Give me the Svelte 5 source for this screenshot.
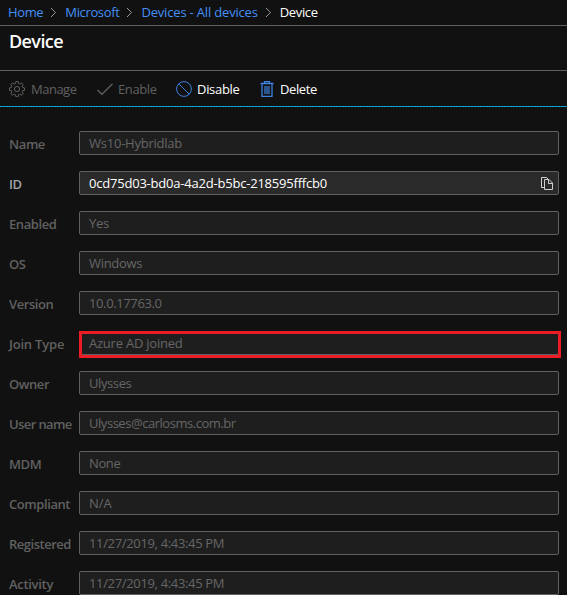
<script lang="ts">
  interface Field {
    label: string;
    value: string;
    labelGap?: number; // letter spacing, px
    gap?: number;
    active?: boolean;
    marked?: boolean;
  }

  const crumbs = ["Home", "Microsoft", "Devices - All devices"];

  const fields: Field[] = [
    { label: "Name", value: "Ws10-Hybridlab", gap: -0.23 },
    { label: "ID", value: "0cd75d03-bd0a-4a2d-b5bc-218595fffcb0", gap: -0.21, active: true },
    { label: "Enabled", value: "Yes" },
    { label: "OS", value: "Windows" },
    { label: "Version", value: "10.0.17763.0", gap: -0.38 },
    { label: "Join Type", value: "Azure AD joined", labelGap: -0.2, gap: -0.23, marked: true },
    { label: "Owner", value: "Ulysses", gap: -0.4 },
    { label: "User name", value: "Ulysses@carlosms.com.br", labelGap: -0.6, gap: -0.46 },
    { label: "MDM", value: "None", gap: -0.4 },
    { label: "Compliant", value: "N/A", gap: 0 },
    { label: "Registered", value: "11/27/2019, 4:43:45 PM", labelGap: -0.48, gap: -0.34 },
    { label: "Activity", value: "11/27/2019, 4:43:45 PM", labelGap: -0.3, gap: -0.34 },
  ];
</script>

<div class="blade">
  <nav class="crumbs">
    {#each crumbs as crumb}
      <span class="link">{crumb}</span>
      <svg class="chevron" width="7" height="11" viewBox="0 0 7 11">
        <path d="M1 1 L5.500 5.500 L1 10" />
      </svg>
    {/each}
    <span>Device</span>
  </nav>

  <header><h1>Device</h1></header>

  <div class="toolbar">
    <button class="manage" disabled>
      <svg width="16" height="16" viewBox="0 0 16 16">
        <path d="M6.8 .6h2.4l.4 2 1.2.5 1.7-1.2 1.7 1.7-1.2 1.7.5 1.2 2 .4v2.4l-2 .4-.5 1.2 1.2 1.7-1.7 1.7-1.7-1.2-1.2.5-.4 2H6.8l-.4-2-1.2-.5-1.7 1.2-1.7-1.7L3 10.900l-.5-1.2-2-.4V6.900l2-.4L3 5.300 1.800 3.600l1.700-1.700 1.700 1.200 1.200-.5z" />
        <circle cx="8" cy="8" r="2.6" />
      </svg>
      <span>Manage</span>
    </button>
    <button class="enable" disabled>
      <svg width="16" height="16" viewBox="0 0 16 16">
        <path d="M.5 9 L5 13.300 L15.500 2.800" stroke-width="1.300" />
      </svg>
      <span>Enable</span>
    </button>
    <button class="disable">
      <svg width="16" height="16" viewBox="0 0 16 16">
        <circle cx="8" cy="8" r="7.400" />
        <path d="M2.800 2.800 L13.200 13.200" />
      </svg>
      <span>Disable</span>
    </button>
    <button class="delete">
      <svg width="14" height="16" viewBox="0 0 14 16">
        <path d="M.5 2.500H13.500M4.500 2.500V.6H9.500V2.500M2 2.500V15.300H12V2.500" stroke-width="1.300" />
        <path d="M5 5V13M7 5V13M9 5V13" stroke-width="1.200" />
      </svg>
      <span>Delete</span>
    </button>
  </div>

  <div class="form">
    {#each fields as field}
      <div class="row" class:active={field.active}>
        <span class="label" style="letter-spacing:{field.labelGap ?? -0.42}px">{field.label}</span>
        <div class="box" class:marked={field.marked}>
          <span style="letter-spacing:{field.gap ?? -0.3}px">{field.value}</span>
          {#if field.active}
            <svg class="copy" width="12" height="13" viewBox="0 0 12 13">
              <path d="M3.500 10.500H.5V.5H5.500L7.500 2.500" />
              <path d="M3.500 2.500H8L11.500 6V12.500H3.500zM7.500 2.500V6.500H11.500" />
            </svg>
          {/if}
        </div>
      </div>
    {/each}
  </div>
</div>

<style>
  :global(body) {
    background: #111;
  }

  .blade {
    height: 595px;
    overflow: hidden;
    background: #111;
    color: #fff;
    font: 13px/18px "Open Sans", "Noto Sans", sans-serif;
    letter-spacing: -0.3px;
    white-space: nowrap;
  }

  svg {
    flex: none;
    fill: none;
    stroke: currentColor;
  }

  .crumbs {
    display: flex;
    align-items: center;
    box-sizing: border-box;
    height: 26px;
    padding: 0 0 1px 8px;
    border-bottom: 1px solid #606060;
    letter-spacing: -0.36px;
  }

  .link {
    color: #4290f8;
  }

  .link:nth-of-type(3) {
    letter-spacing: -0.18px;
  }

  .chevron {
    margin: 1px 8px 0 7px;
    color: #959595;
  }

  header {
    box-sizing: border-box;
    height: 45px;
    padding: 3px 9px;
    border-bottom: 1px solid #606060;
  }

  h1 {
    margin: 0;
    font-size: 18px;
    font-weight: 600;
    line-height: 24px;
    letter-spacing: -0.6px;
  }

  .toolbar {
    display: flex;
    align-items: center;
    height: 35px;
    padding: 0 0 1px 9px;
    background: repeating-linear-gradient(90deg, #00b7f0 0 2px, #1b7b9e 2px 3px) bottom / 100% 1px no-repeat;
  }

  button {
    display: flex;
    align-items: center;
    gap: 5px;
    padding: 0;
    border: 0;
    background: none;
    color: #fff;
    font: inherit;
    letter-spacing: inherit;
  }

  button:disabled {
    color: #606060;
  }

  .manage {
    width: 88px;
    gap: 6px;
    letter-spacing: -0.5px;
  }

  .enable {
    width: 79px;
    letter-spacing: -0.4px;
  }

  .disable {
    width: 84px;
  }

  .delete {
    gap: 6px;
    letter-spacing: -0.4px;
  }

  .disable svg,
  .delete svg {
    color: #3e82df;
  }

  .form {
    padding-top: 24px;
  }

  .row {
    display: flex;
    height: 40px;
  }

  .label {
    flex: none;
    width: 79px;
    padding: 4px 0 0 9px;
    box-sizing: border-box;
    color: #606060;
    font-weight: 600;
  }

  .box {
    display: flex;
    flex: none;
    align-items: center;
    justify-content: space-between;
    box-sizing: border-box;
    width: 480px;
    height: 24px;
    padding: 0 5px 0 9px;
    border: 1px solid #606060;
    border-radius: 2px;
    background: #1e1e1e;
    color: #666;
  }

  .marked {
    position: relative;
  }

  /* highlight frame sits over the field border and a little past it */
  .marked::after {
    content: "";
    position: absolute;
    inset: -1px -3px -4px -1px;
    border: 3px solid #ed1c24;
  }

  .active .label {
    color: #a3a3a3;
  }

  .active .box {
    background: #2a2a2a;
    color: #fff;
  }

  .copy {
    color: #d0d0d0;
  }
</style>
